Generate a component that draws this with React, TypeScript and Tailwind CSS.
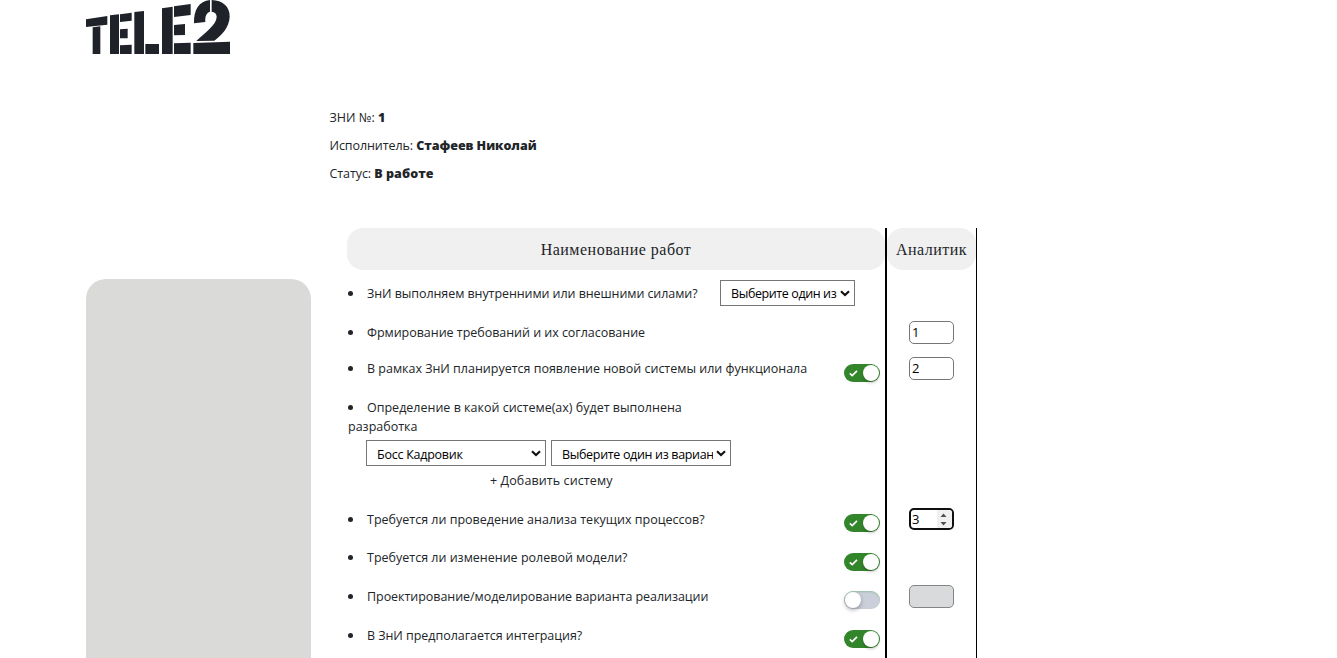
import type { ReactNode } from "react";

function Logo() {
  return (
    <svg className="block h-[55px] w-[145px]" viewBox="30 0 435 165" fill="#1f2229" aria-label="TELE2">
      <path d="M30 58 94 48V74L30 81ZM50 82 73 79V162H50Z" />
      <path d="M102 46 129 43V162H102ZM132 43 167 38V62L132 66ZM132 88 155 86V115H132ZM132 136 167 134V162H132Z" />
      <path d="M175 36 204 33V162H175ZM208 132H249V162H208Z" />
      <path d="M258 25 290 20V162H258ZM294 19 344 12V45L294 51ZM294 75 327 72V105L294 106ZM294 130 344 128V162H294Z" />
      <path d="M354 70C353 30 369 3 402 0V35C391 39 387 48 388 66ZM407 0C440 1 462 20 461 50C460 84 434 107 415 122L361 123C388 97 421 75 422 51C422 41 416 36 407 35ZM352 129 462 125V162H352Z" />
    </svg>
  );
}

function Toggle({ on }: { on: boolean }) {
  return on ? (
    <span className="mt-[7px] flex h-[18px] w-9 shrink-0 items-center justify-between rounded-full bg-[#32852a] pr-px pl-[5px]">
      <svg className="h-[7px] w-[9px]" viewBox="0 0 9 7" fill="none" stroke="white" strokeWidth="1.7">
        <path d="M.8 3.3 3.2 5.6 8 .8" />
      </svg>
      <span className="size-4 rounded-full bg-white shadow-[0_2px_3px_rgba(0,0,0,0.22)]" />
    </span>
  ) : (
    <span className="mt-[7px] flex h-[18px] w-9 shrink-0 items-center rounded-full bg-[#cbcfd9] pl-px shadow-[inset_0_1px_2px_#98bfa4]">
      <span className="size-4 rounded-full bg-white shadow-[0_2px_4px_rgba(0,0,0,0.3)]" />
    </span>
  );
}

function Select({ className, field = "", value }: { className: string; field?: string; value: string }) {
  return (
    <div className={`grid h-[26px] items-center ${className}`}>
      <select className={`col-start-1 row-start-1 h-full w-full min-w-0 appearance-none border border-[#767676] bg-white pr-[17px] pl-2.5 text-[12.5px] text-black ${field}`}>
        <option>{value}</option>
      </select>
      <svg className="pointer-events-none col-start-1 row-start-1 mr-[5px] h-[7px] w-[10px] justify-self-end" viewBox="0 0 10 7" fill="none" stroke="#101010" strokeWidth="2.1">
        <path d="M1 1.2 5 5 9 1.2" />
      </svg>
    </div>
  );
}

function Item({ className, text, children }: { className: string; text: string; children?: ReactNode }) {
  return (
    <li className={`flex items-center pr-[5px] ${className}`}>
      <span className="mr-[14px] ml-px size-[5px] shrink-0 rounded-full bg-[#212529]" />
      <span className="whitespace-nowrap">{text}</span>
      {children}
    </li>
  );
}

const box = "h-[23px] w-[45px] rounded-[5px] border border-[#767676] pb-[2px] pl-[2px] text-[13px] text-black";

export default function App() {
  return (
    <div className="h-[658px] overflow-hidden bg-white pl-[86px] font-['Open_Sans',sans-serif] text-[12.5px] leading-[19px] text-[#212529]">
      <header className="h-[107px]">
        <Logo />
      </header>
      <div className="flex">
        <aside className="mt-[172px] h-[400px] w-[225px] rounded-t-[20px] bg-[#dadad8]" />
        <main className="ml-[18px]">
          <div className="-mt-[3px] h-[121px] pl-[0.5px] leading-[28px]">
            <p>ЗНИ №: <b className="font-extrabold">1</b></p>
            <p className="tracking-[-0.08px]">Исполнитель: <b className="font-extrabold tracking-[-0.05px]">Стафеев Николай</b></p>
            <p className="tracking-[-0.08px]">Статус: <b className="font-extrabold tracking-[0.05px]">В работе</b></p>
          </div>
          <div className="mt-[3px] ml-[18px] flex h-[430px]">
            <section className="w-[538px]">
              <h2 className="flex h-[42px] items-center justify-center rounded-[16px] bg-[#f0f0f0] font-['Liberation_Serif',serif] text-[16px] tracking-[0.5px]">Наименование работ</h2>
              <ul>
                <Item className="h-[46px] tracking-[-0.07px]" text="ЗнИ выполняем внутренними или внешними силами?">
                  <Select className="mr-[25px] ml-auto w-[135px] tracking-[-0.4px]" value="Выберите один из вариантов" />
                </Item>
                <Item className="h-8 tracking-[-0.03px]" text="Фрмирование требований и их согласование" />
                <Item className="h-[41px] tracking-[-0.01px]" text="В рамках ЗнИ планируется появление новой системы или функционала">
                  <span className="ml-auto pt-[2px]"><Toggle on /></span>
                </Item>
                <li className="h-[111px] pt-[9px]">
                  <div className="flex items-center">
                    <span className="mr-[14px] ml-px size-[5px] rounded-full bg-[#212529]" />
                    Определение в какой системе(ах) будет выполнена
                  </div>
                  <div className="pl-px">разработка</div>
                  <div className="mt-1 ml-[19px] flex gap-[5px]">
                    <Select className="w-[180px] tracking-[-0.25px]" field="pt-[2px]" value="Босс Кадровик" />
                    <Select className="w-[180px] tracking-[-0.33px]" field="pt-[2px]" value="Выберите один из вариантов" />
                  </div>
                  <div className="mt-[5px] pl-[143px] tracking-[0.1px]">+ Добавить систему</div>
                </li>
                <Item className="h-[39px]" text="Требуется ли проведение анализа текущих процессов?">
                  <span className="ml-auto"><Toggle on /></span>
                </Item>
                <Item className="h-[37px]" text="Требуется ли изменение ролевой модели?">
                  <span className="ml-auto pt-[2px]"><Toggle on /></span>
                </Item>
                <Item className="h-10 tracking-[-0.05px]" text="Проектирование/моделирование варианта реализации">
                  <span className="ml-auto"><Toggle on={false} /></span>
                </Item>
                <Item className="h-[39px] tracking-[-0.04px]" text="В ЗнИ предполагается интеграция?">
                  <span className="ml-auto"><Toggle on /></span>
                </Item>
              </ul>
            </section>
            <section className="flex w-[92px] flex-col items-center border-r border-l-2 border-black">
              <h2 className="flex h-[42px] w-full items-center justify-center rounded-[16px] bg-[#f0f0f0] font-['Liberation_Serif',serif] text-[16px] tracking-[0.5px]">Аналитик</h2>
              <input className={`mt-[51px] ${box}`} defaultValue="1" />
              <input className={`mt-[13px] ${box}`} defaultValue="2" />
              <div className="mt-32 flex h-[22px] w-[45px] shrink-0 items-stretch justify-between overflow-hidden rounded-[5px] border-2 border-[#101010] pl-px text-[13px] leading-[19px] text-black">
                3
                <svg className="h-[18px] w-[15px] bg-[#f0f0f0]" viewBox="0 0 15 18" fill="#505050">
                  <path d="M3.5 7 6.5 3.5 9.5 7ZM3.5 12 6.5 15.5 9.5 12Z" />
                </svg>
              </div>
              <div className="mt-[55px] h-[23px] w-[45px] shrink-0 rounded-[5px] border border-[#858585] bg-[#d8dadc]" />
            </section>
          </div>
        </main>
      </div>
    </div>
  );
}
